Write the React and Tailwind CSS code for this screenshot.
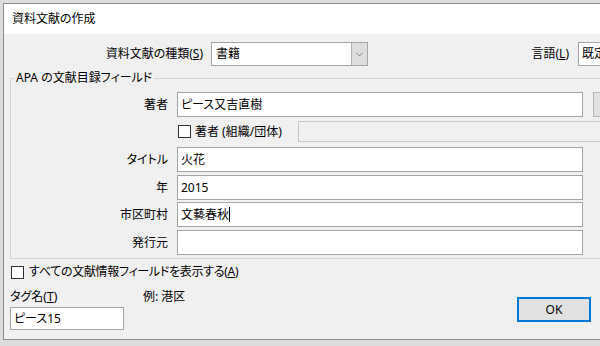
import { ChevronDown } from 'lucide-react';

function Field({ label, value, caret, children, className = '' }) {
  return (
    <div className={`flex items-center ${className}`}>
      <div className="w-[157px] shrink-0 text-right">{label}</div>
      <div className="ml-[9px] w-[406px] shrink-0 h-[25px] border border-[#a5a5a5] bg-white flex items-center px-[3px]">
        <span>{value}</span>
        {caret && <span className="w-[1px] h-[15px] bg-black" />}
      </div>
      {children}
    </div>
  );
}

function Box() {
  return <span className="w-[13px] h-[13px] border border-[#333] bg-white shrink-0" />;
}

export default function App() {
  return (
    <div className="w-[600px] h-[346px] overflow-hidden bg-[#dcdcdc] font-['Noto_Sans','Noto_Sans_CJK_JP',sans-serif] [font-feature-settings:'palt'] text-[12px] leading-[16px] text-black whitespace-nowrap">
      <div className="ml-[3px] mt-[3px] w-[660px] h-[337px] border border-[#8a8a8a] bg-[#f0f0f0] flex flex-col">
        <div className="h-[30px] bg-white flex items-center pl-[8px]">資料文献の作成</div>

        {/* type row */}
        <div className="mt-[8px] h-[24px] flex items-center">
          <div className="w-[199px] shrink-0 text-right">
            資料文献の種類(<span className="underline">S</span>)
          </div>
          <div className="ml-[8px] w-[157px] shrink-0 h-[24px] border border-[#a5a5a5] bg-white flex">
            <span className="flex-1 pl-[4px] flex items-center">書籍</span>
            <span className="w-[16px] h-full bg-[#dedede] border-l border-[#b0b0b0] flex items-center justify-center">
              <ChevronDown size={11} strokeWidth={1.5} className="text-[#555]" />
            </span>
          </div>
          <div className="ml-[162px] w-[39px] shrink-0 text-right">
            言語(<span className="underline">L</span>)
          </div>
          <div className="ml-[9px] w-[100px] shrink-0 h-[24px] border border-[#a5a5a5] bg-white flex items-center pl-[3px]">既定</div>
        </div>

        {/* APA group */}
        <fieldset className="ml-[6px] mt-[4px] w-[650px] border border-[#d5d5d5] pt-[6px] pb-[3px]">
          <legend className="ml-[3px] px-[2px]">APA の文献目録フィールド</legend>
          <Field label="著者" value="ピース又吉直樹">
            <div className="ml-[10px] w-[40px] shrink-0 h-[25px] border border-[#b5b5b5] bg-[#e1e1e1]" />
          </Field>
          <div className="mt-[4px] h-[21px] flex items-center">
            <div className="ml-[167px] w-[120px] shrink-0 flex items-center">
              <Box />
              <span className="ml-[4px]">著者 (組織/団体)</span>
            </div>
            <div className="w-[330px] shrink-0 h-[21px] border border-[#c8c8c8] bg-[#f0f0f0]" />
          </div>
          <Field className="mt-[5px]" label="タイトル" value="火花" />
          <Field className="mt-[3px]" label="年" value="2015" />
          <Field className="mt-[2px]" label="市区町村" value="文藝春秋" caret />
          <Field className="mt-[3px]" label="発行元" value="" />
        </fieldset>

        {/* bottom */}
        <div className="flex">
          <div className="w-[300px] shrink-0 flex flex-col">
            <div className="mt-[5px] ml-[7px] h-[16px] flex items-center">
              <Box />
              <span className="ml-[5px] tracking-[-0.3px]">
                すべての文献情報フィールドを表示する(<span className="underline">A</span>)
              </span>
            </div>
            <div className="mt-[9px] ml-[6px] h-[16px] flex">
              <span className="w-[133px] shrink-0">
                タグ名(<span className="underline">T</span>)
              </span>
              <span>例: 港区</span>
            </div>
            <div className="mt-[2px] ml-[6px] w-[114px] h-[23px] border border-[#a5a5a5] bg-white flex items-center pl-[3px]">
              ピース15
            </div>
          </div>
          <button className="mt-[38px] ml-[213px] w-[74px] h-[25px] shrink-0 border-2 border-[#0078d7] bg-[#e1e1e1] flex items-center justify-center">
            OK
          </button>
        </div>
      </div>
    </div>
  );
}
